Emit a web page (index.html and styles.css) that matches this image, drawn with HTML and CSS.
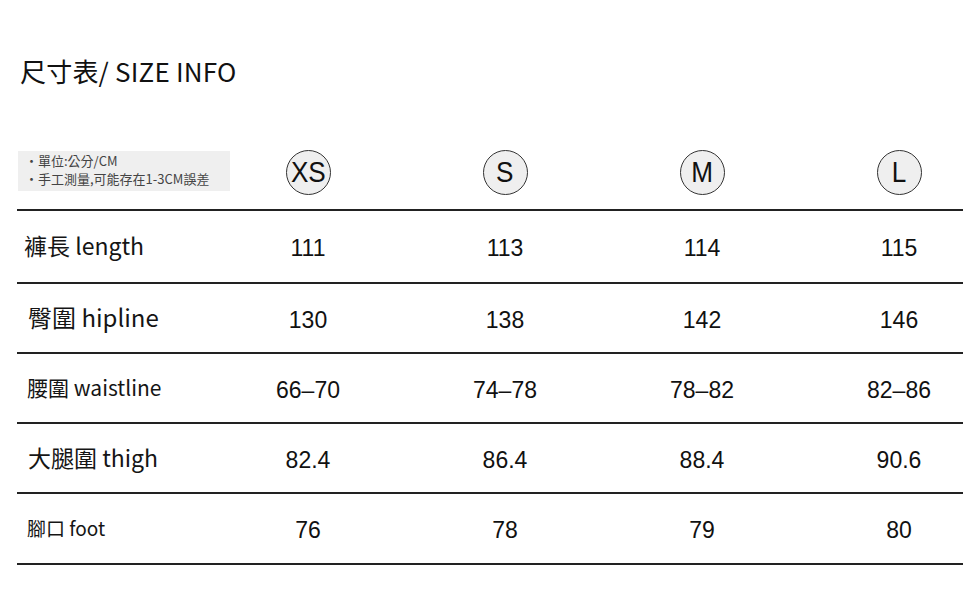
FILE: index.html
```html
<!DOCTYPE html>
<html lang="zh-Hant">
<head>
<meta charset="utf-8">
<title>尺寸表 / SIZE INFO</title>
<link rel="stylesheet" href="styles.css">
</head>
<body>
<div class="page">
  <h1 class="title">尺寸表/ SIZE INFO</h1>
  <div class="table">
    <div class="row head">
      <div class="label">
        <div class="note">
          <div>·單位:公分/CM</div>
          <div>·手工測量,可能存在1-3CM誤差</div>
        </div>
      </div>
      <div class="val"><span class="size"><span>XS</span></span></div>
      <div class="val"><span class="size"><span>S</span></span></div>
      <div class="val"><span class="size"><span>M</span></span></div>
      <div class="val"><span class="size"><span>L</span></span></div>
    </div>
    <div class="row r1">
      <div class="label l1">褲長 length</div>
      <div class="val">111</div><div class="val">113</div><div class="val">114</div><div class="val">115</div>
    </div>
    <div class="row">
      <div class="label l2">臀圍 hipline</div>
      <div class="val">130</div><div class="val">138</div><div class="val">142</div><div class="val">146</div>
    </div>
    <div class="row">
      <div class="label l3">腰圍 waistline</div>
      <div class="val">66–70</div><div class="val">74–78</div><div class="val">78–82</div><div class="val">82–86</div>
    </div>
    <div class="row">
      <div class="label l4">大腿圍 thigh</div>
      <div class="val">82.4</div><div class="val">86.4</div><div class="val">88.4</div><div class="val">90.6</div>
    </div>
    <div class="row r5">
      <div class="label l5">腳口 foot</div>
      <div class="val">76</div><div class="val">78</div><div class="val">79</div><div class="val">80</div>
    </div>
  </div>
</div>
</body>
</html>
```
FILE: styles.css
```css
* { box-sizing: border-box; }
html, body { margin: 0; padding: 0; background: #fff; }
body {
  font-family: "Noto Sans CJK TC", "Noto Sans CJK SC", sans-serif;
  color: #151515;
}
.page {
  padding: 55px 16px 0 17px;
}
.title {
  margin: 0 0 0 3px;
  font-size: 26px;
  line-height: 31px;
  font-weight: 400;
  color: #111;
}
.title { letter-spacing: 0.2px; }
.table {
  margin-top: 54px;
  width: 946px;
}
.row {
  display: flex;
  align-items: center;
  height: 70px;
  border-bottom: 2px solid #222;
}
.row.head {
  height: 71px;
  padding-bottom: 5px;
}
.row.r1 { height: 73px; }
.row.r5 { height: 71px; }
.label {
  width: 231px;
  flex: none;
  white-space: nowrap;
  padding-bottom: 3px;
}
.val {
  width: 120px;
  flex: none;
  text-align: center;
  font-family: "Liberation Sans", Arial, sans-serif;
  font-size: 23px;
  color: #111;
  padding-top: 4px;
}
.head .val { padding-top: 0; }
.val + .val { margin-left: 77px; }
.note {
  margin-left: 1px;
  width: 212px;
  height: 40px;
  background: #efefef;
  padding: 1px 0 0 7px;
  font-size: 13px;
  line-height: 18px;
  color: #444;
}
.size {
  display: inline-flex;
  align-items: center;
  justify-content: center;
  width: 45px;
  height: 45px;
  border: 1px solid #333;
  border-radius: 50%;
  background: #efefef;
  font-family: "Liberation Sans", Arial, sans-serif;
  font-size: 29px;
  color: #111;
}
.size span { display: inline-block; transform: scaleX(0.9); }
.l1 { padding-left: 7px; font-size: 23px; }
.l2 { padding-left: 11px; font-size: 24px; }
.l3 { padding-left: 10px; font-size: 21px; }
.l4 { padding-left: 11px; font-size: 23px; }
.l5 { padding-left: 10px; font-size: 19px; }
```
